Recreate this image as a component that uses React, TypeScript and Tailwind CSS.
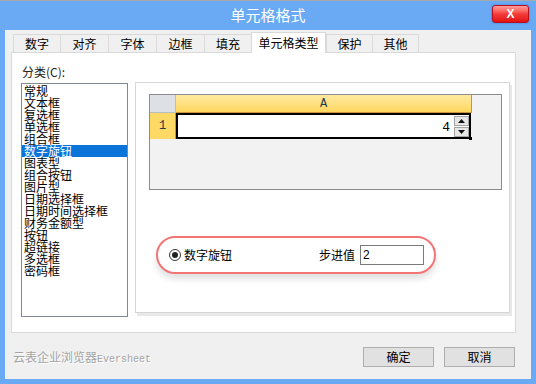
const tabs = [
  { label: "数字", w: "w-[47px]" },
  { label: "对齐", w: "w-[48px]" },
  { label: "字体", w: "w-[48px]" },
  { label: "边框", w: "w-[48px]" },
  { label: "填充", w: "w-[47px]" },
  { label: "单元格类型", w: "w-[75px]", active: true },
  { label: "保护", w: "w-[46px]" },
  { label: "其他", w: "w-[47px]" },
]

const categories = [
  "常规",
  "文本框",
  "复选框",
  "单选框",
  "组合框",
  "数字旋钮",
  "图表型",
  "组合按钮",
  "图片型",
  "日期选择框",
  "日期时间选择框",
  "财务金额型",
  "按钮",
  "超链接",
  "多选框",
  "密码框",
]

function SpinButton({ up }: { up?: boolean }) {
  return (
    <div className="w-[15px] h-[10px] bg-[#e6e6e6] border border-[#a3a3a3] flex items-center justify-center">
      <svg width="7" height="4" viewBox="0 0 7 4">
        {up ? <polygon points="3.5,0 7,4 0,4" fill="#111" /> : <polygon points="0,0 7,0 3.5,4" fill="#111" />}
      </svg>
    </div>
  )
}

export default function App() {
  return (
    <div className="w-[536px] h-[384px] bg-[#6aa9f4] border-t border-[#a9a9a9] flex flex-col font-['Noto_Sans_CJK_SC',sans-serif] text-black">
      {/* title bar */}
      <div className="relative h-[29px] flex items-center justify-center text-white text-[15px]">
        单元格格式
        <div className="absolute right-[7px] top-[4px] w-[37px] h-[18px] rounded-[3px] border border-[#b5101c] bg-gradient-to-b from-[#ff9a9a] via-[#f43a3a] to-[#e20e0e] flex items-center justify-center text-white text-[12px] font-bold font-['Liberation_Sans',sans-serif] shadow-[0_0_2px_#2f6fd6]">
          X
        </div>
      </div>

      {/* body */}
      <div className="mx-[5px] h-[349px] bg-[#f0f0f0] flex flex-col">
        <div className="ml-[6px] mt-[2px]">
          <div className="flex items-end h-[20px] pl-[2px]">
            {tabs.map((t, i) =>
              t.active ? (
                <div
                  key={t.label}
                  className={`${t.w} h-[21px] -mb-px relative z-10 bg-white border-t border-l border-r border-[#d9d9d9] flex items-center justify-center text-[12px]`}
                >
                  {t.label}
                </div>
              ) : (
                <div
                  key={t.label}
                  className={`${t.w} h-[18px] bg-[#f0f0f0] border-t border-l border-[#d9d9d9] ${i === tabs.length - 1 ? "border-r" : ""} flex items-center justify-center text-[12px]`}
                >
                  {t.label}
                </div>
              )
            )}
          </div>

          {/* tab panel */}
          <div className="w-[505px] h-[281px] bg-white border border-[#d9d9d9] flex pt-[11px] pl-[9px]">
            <div className="w-[107px] flex flex-col">
              <div className="h-[16px] leading-[16px] text-[12px] text-[#222] mb-[3px] pl-px">分类(C):</div>
              <div className="h-[234px] border border-[#828790] bg-white pt-px">
                {categories.map((c) => (
                  <div
                    key={c}
                    className={`h-[12px] leading-[12px] text-[12px] pl-[2px] whitespace-nowrap ${c === "数字旋钮" ? "bg-[#0a74d8] text-white" : ""}`}
                  >
                    {c}
                  </div>
                ))}
              </div>
            </div>

            {/* right sub panel */}
            <div className="ml-[7px] mt-[18px] w-[375px] h-[231px] bg-white border border-[#d6d6d6] shadow-[2px_3px_0_#e8e8e8] flex flex-col pl-[13px] pt-[11px]">
              <div className="w-[353px] h-[96px] border border-[#8c8c8c] bg-[#f2f2f2] font-['Liberation_Mono',monospace] text-[12px] text-[#1f3a4c]">
                <div className="flex h-[18px]">
                  <div className="w-[26px] bg-[#dde1e6] border-r border-b border-[#b9bec5]" />
                  <div className="w-[296px] bg-gradient-to-b from-[#ffeaa0] to-[#ffd75c] border-r border-b border-[#c9953a] flex items-center justify-center">
                    A
                  </div>
                </div>
                <div className="flex h-[26px]">
                  <div className="w-[26px] bg-[#ffd966] border-r border-[#c9953a] flex items-center justify-center">1</div>
                  <div className="relative w-[295px] bg-white border-2 border-black flex items-start justify-end">
                    <span className="mr-[4px] mt-[3px] text-[13px] text-black">4</span>
                    <div className="flex flex-col gap-px mt-px">
                      <SpinButton up />
                      <SpinButton />
                    </div>
                    <div className="absolute -right-[3px] -bottom-[3px] w-[3px] h-[3px] bg-black" />
                  </div>
                </div>
              </div>

              {/* highlighted option */}
              <div className="ml-[7px] mt-[46px] w-[280px] h-[38px] rounded-full border-2 border-[#f27474] shadow-[0_5px_6px_rgba(0,0,0,0.12)] flex items-center pl-[11px] pr-[10px] text-[12px]">
                <div className="w-[12px] h-[12px] rounded-full border border-[#3a3a3a] bg-white flex items-center justify-center">
                  <div className="w-[6px] h-[6px] rounded-full bg-[#222]" />
                </div>
                <span className="ml-[3px]">数字旋钮</span>
                <span className="ml-auto">步进值</span>
                <div className="ml-[5px] w-[64px] h-[20px] border border-[#7a7a7a] bg-white pl-[2px] leading-[18px] font-['Liberation_Sans',sans-serif]">
                  2
                </div>
              </div>
            </div>
          </div>
        </div>

        {/* footer */}
        <div className="mt-[14px] flex items-center pl-[8px] pr-[16px]">
          <span className="text-[12px] text-[#a3a3a3] [text-shadow:1px_1px_0_#ffffff]">
            云表企业浏览器<span className="font-['Liberation_Mono',monospace] text-[10px]">Eversheet</span>
          </span>
          <div className="ml-auto flex gap-[10px]">
            <div className="w-[71px] h-[20px] bg-[#e1e1e1] border border-[#adadad] flex items-center justify-center text-[12px]">确定</div>
            <div className="w-[71px] h-[20px] bg-[#e1e1e1] border border-[#adadad] flex items-center justify-center text-[12px]">取消</div>
          </div>
        </div>
      </div>
    </div>
  )
}
